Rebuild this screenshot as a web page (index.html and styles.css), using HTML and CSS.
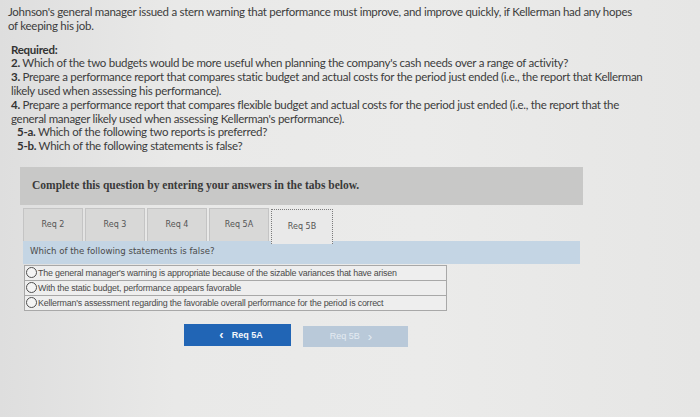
FILE: index.html
```html
<!DOCTYPE html>
<html>
<head>
<meta charset="utf-8">
<link rel="stylesheet" href="styles.css">
</head>
<body>
<div class="page">
  <p class="intro">Johnson's general manager issued a stern warning that performance must improve, and improve quickly, if Kellerman had any hopes of keeping his job.</p>
  <div class="required">
    <div class="req-title">Required:</div>
    <div><b>2.</b> Which of the two budgets would be more useful when planning the company's cash needs over a range of activity?</div>
    <div><b>3.</b> Prepare a performance report that compares static budget and actual costs for the period just ended (i.e., the report that Kellerman likely used when assessing his performance).</div>
    <div><b>4.</b> Prepare a performance report that compares flexible budget and actual costs for the period just ended (i.e., the report that the general manager likely used when assessing Kellerman's performance).</div>
    <div class="sub"><b>5-a.</b> Which of the following two reports is preferred?</div>
    <div class="sub"><b>5-b.</b> Which of the following statements is false?</div>
  </div>

  <div class="instruct">Complete this question by entering your answers in the tabs below.</div>

  <div class="tabarea">
    <div class="tabs">
      <div class="tab">Req 2</div>
      <div class="tab">Req 3</div>
      <div class="tab">Req 4</div>
      <div class="tab">Req 5A</div>
      <div class="tab active">Req 5B</div>
    </div>
    <div class="question">Which of the following statements is false?</div>
    <div class="options">
      <label class="opt"><span class="radio"></span>The general manager's warning is appropriate because of the sizable variances that have arisen</label>
      <label class="opt"><span class="radio"></span>With the static budget, performance appears favorable</label>
      <label class="opt"><span class="radio"></span>Kellerman's assessment regarding the favorable overall performance for the period is correct</label>
    </div>
    <div class="nav">
      <div class="btn prev"><span class="chev">&#8249;</span> Req 5A</div>
      <div class="btn next">Req 5B <span class="chev">&#8250;</span></div>
    </div>
  </div>
</div>
</body>
</html>
```

FILE: styles.css
```css
html, body {
  margin: 0;
  padding: 0;
}
body {
  width: 700px;
  height: 417px;
  overflow: hidden;
  background: linear-gradient(90deg, #dedede 0%, #e9e9e8 25%, #ebebea 60%, #e6e6e5 100%);
  font-family: "Lato", "Liberation Sans", sans-serif;
  color: #3c3c3c;
}
.page {
  padding: 5px 8px 0 8px;
}
.intro {
  margin: 0 0 10px 0;
  font-size: 11.5px;
  letter-spacing: -0.28px;
  line-height: 13.8px;
  width: 628px;
}
.required {
  font-size: 11.5px;
  letter-spacing: -0.28px;
  line-height: 13.8px;
  padding-left: 3px;
  width: 635px;
}
.required b {
  font-weight: 700;
  color: #333;
}
.req-title {
  font-weight: 700;
  color: #333;
}
.sub {
  padding-left: 6px;
}
.instruct {
  margin: 14px 0 0 12px;
  width: 563px;
  height: 38px;
  box-sizing: border-box;
  padding: 12px 0 0 12px;
  background: #c8c8c7;
  font-family: "Liberation Serif", serif;
  font-weight: 700;
  font-size: 11.5px;
  color: #3a3a3a;
}
.tabarea {
  margin: 3px 0 0 15px;
  width: 557px;
}
.tabs {
  display: flex;
  gap: 2px;
  height: 33px;
  align-items: flex-end;
}
.tab {
  width: 60px;
  height: 33px;
  box-sizing: border-box;
  background: #d8d8d7;
  border: 1px solid #c4c4c4;
  border-bottom: none;
  display: flex;
  align-items: center;
  justify-content: center;
  font-family: "DejaVu Sans", sans-serif;
  font-size: 8px;
  color: #555;
}
.tab.active {
  width: 62px;
  height: 35px;
  margin-bottom: -3px;
  background: #e9e9e9;
  border: 1px dotted #7a7a7a;
  border-bottom: none;
  position: relative;
  z-index: 1;
}
.question {
  height: 23px;
  box-sizing: border-box;
  padding: 5px 0 0 7px;
  background: #c4d5e4;
  font-family: "DejaVu Sans", sans-serif;
  font-size: 8.6px;
  color: #4a4a4a;
}
.options {
  margin: 1px 0 0 1px;
  width: 421px;
  border: 1px solid #a8a8a8;
  background: #eeeeee;
}
.opt {
  display: flex;
  align-items: center;
  height: 14px;
  font-family: "Liberation Sans", sans-serif;
  font-size: 8.9px;
  letter-spacing: -0.2px;
  color: #4a4a4a;
}
.opt + .opt {
  border-top: 1px solid #a8a8a8;
}
.radio {
  width: 9px;
  height: 9px;
  border: 1.5px solid #4e4e4e;
  border-radius: 50%;
  background: #f4f4f4;
  margin: 0 1px 0 1px;
  flex: none;
}
.nav {
  margin-top: 13px;
  display: flex;
  justify-content: center;
  gap: 12px;
  padding-right: 12px;
}
.btn {
  width: 107px;
  height: 22px;
  display: flex;
  align-items: center;
  justify-content: center;
  font-family: "Liberation Sans", sans-serif;
  font-weight: 700;
  font-size: 9px;
}
.btn .chev {
  font-size: 13px;
  margin: 0 8px;
  line-height: 1;
}
.prev {
  background: #2165b5;
  color: #f2f6fb;
}
.next {
  width: 105px;
  height: 21px;
  margin-top: 2px;
  background: #b9c9d9;
  color: #e4ebf2;
  font-weight: 400;
}
```
